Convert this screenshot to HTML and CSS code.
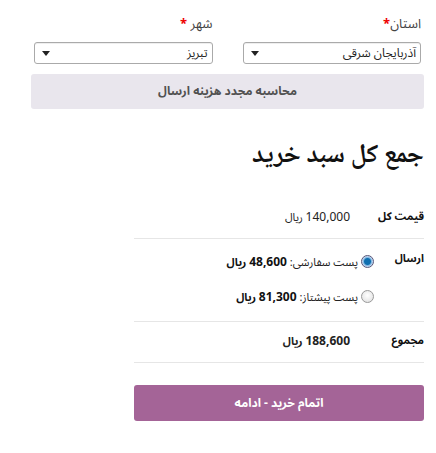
FILE: index.html
```html
<!DOCTYPE html>
<html lang="fa" dir="rtl">
<head>
<meta charset="utf-8">
<link rel="stylesheet" href="styles.css">
</head>
<body>
<div class="page">
  <div class="shipping-form">
    <div class="fields">
      <div class="field">
        <label class="label">استان<span class="req">*</span></label>
        <div class="select"><span class="select-text">آذربایجان شرقی</span><span class="arrow"></span></div>
      </div>
      <div class="field">
        <label class="label">شهر <span class="req">*</span></label>
        <div class="select"><span class="select-text">تبریز</span><span class="arrow"></span></div>
      </div>
    </div>
    <button class="btn-update">محاسبه مجدد هزینه ارسال</button>
  </div>

  <div class="totals">
    <h2 class="title">جمع کل سبد خرید</h2>
    <div class="row row-sub">
      <div class="th">قیمت کل</div>
      <div class="td"><span class="num">140,000</span>&nbsp;ریال</div>
    </div>
    <div class="row row-ship">
      <div class="th">ارسال</div>
      <div class="td options">
        <div class="opt"><span class="radio checked"></span>پست سفارشی:&nbsp;<b><span class="num">48,600</span>&nbsp;ریال</b></div>
        <div class="opt"><span class="radio"></span>پست پیشتاز:&nbsp;<b><span class="num">81,300</span>&nbsp;ریال</b></div>
      </div>
    </div>
    <div class="row row-total">
      <div class="th">مجموع</div>
      <div class="td"><b><span class="num">188,600</span>&nbsp;ریال</b></div>
    </div>
    <button class="btn-checkout">اتمام خرید - ادامه</button>
  </div>
</div>
</body>
</html>
```
FILE: styles.css
```css
* { box-sizing: border-box; }
html, body { margin: 0; padding: 0; background: #fff; }
body {
  font-family: "Noto Sans Arabic", "Noto Sans Arabic UI", "DejaVu Sans", sans-serif;
  color: #333;
  font-size: 12px;
}
.page { width: 436px; }

.shipping-form { padding: 14px 12px 0 31px; }
.fields { display: flex; gap: 30px; padding-left: 3px; padding-right: 3px; }
.field { flex: 1; display: flex; flex-direction: column; }
.label { font-size: 13px; color: #444; line-height: 20px; height: 20px; margin-bottom: 8px; white-space: nowrap; }
.req { color: #e00; font-weight: bold; }
.select {
  height: 22px;
  border: 1px solid #aaa;
  border-radius: 3px;
  background: #fff;
  display: flex;
  align-items: center;
  justify-content: space-between;
  padding: 0 4px 0 7px;
  box-shadow: inset 0 1px 0 #eee;
}
.select-text { font-size: 12px; color: #222; white-space: nowrap; }
.arrow {
  width: 0; height: 0;
  border-left: 4px solid transparent;
  border-right: 4px solid transparent;
  border-top: 5px solid #222;
}
.btn-update {
  display: block;
  width: 393px;
  height: 35px;
  margin-top: 10px;
  border: 0;
  border-radius: 3px;
  background: #e9e6ed;
  color: #515151;
  font-family: inherit;
  font-weight: bold;
  font-size: 12px;
}

.totals { margin: 0 12px 0 134px; padding-top: 30px; }
.title { margin: 0 0 26px; height: 34px; font-size: 26px; font-weight: bold; color: #111; line-height: 34px; font-family: "Noto Naskh Arabic", "Noto Naskh Arabic UI", "Noto Sans Arabic", "DejaVu Sans", serif; }
.row { display: flex; border-bottom: 1px solid #e6e6e6; line-height: 16px; }
.th { width: 50px; font-weight: bold; font-size: 11px; color: #111; white-space: nowrap; height: 16px; }
.td { flex: 1; color: #222; font-size: 11px; white-space: nowrap; }
.row-sub .td, .row-total .td { padding-right: 24px; height: 16px; }
.num { font-family: "Noto Sans", "DejaVu Sans", sans-serif; font-size: 12px; }
.row-sub { height: 40px; padding-top: 10px; }
.row-ship { height: 83px; padding-top: 15px; }
.row-ship .th { margin-top: -3px; }
.row-total { height: 41px; padding-top: 11px; }
.options { display: flex; flex-direction: column; gap: 19px; }
.opt { height: 16px; line-height: 16px; }
.opt b { color: #111; }
.radio {
  width: 13px; height: 13px; border-radius: 50%;
  border: 1px solid #999;
  background: radial-gradient(circle at 50% 40%, #fff, #ddd);
  margin-left: 3px;
  display: inline-block;
  vertical-align: -2px;
}
.radio.checked {
  background: radial-gradient(circle, #0e6fb0 0 3px, #7fb6e0 4px, #eef 6px);
  border-color: #557;
}
.btn-checkout {
  display: block;
  width: 100%;
  height: 36px;
  margin-top: 22px;
  border: 0;
  border-radius: 3px;
  background: #a46497;
  color: #fff;
  font-family: inherit;
  font-weight: bold;
  font-size: 12px;
}
```
